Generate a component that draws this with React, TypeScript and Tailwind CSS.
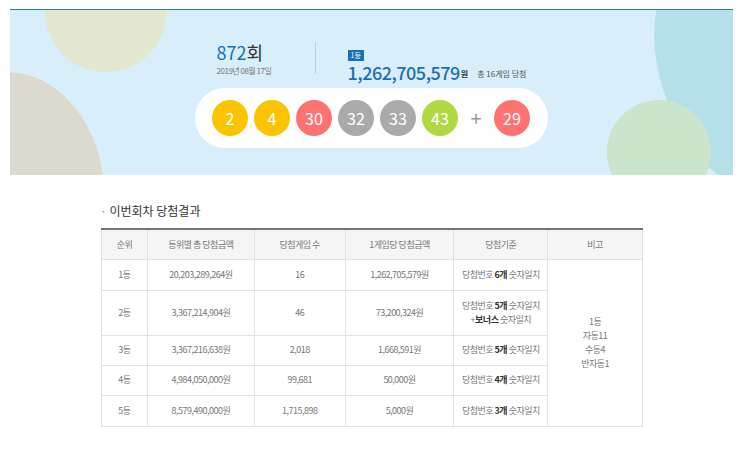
export default function App() {
  const f = { fontFamily: '"Noto Sans CJK KR","Noto Sans",sans-serif' };
  const balls: [string, string][] = [
    ["2", "bg-[#fbc400]"], ["4", "bg-[#fbc400]"], ["30", "bg-[#ff7272]"],
    ["32", "bg-[#aaaaaa]"], ["33", "bg-[#aaaaaa]"], ["43", "bg-[#b0d840]"],
  ];
  const rows = [
    ["1등", "20,203,289,264원", "16", "1,262,705,579원", "6", false],
    ["2등", "3,367,214,904원", "46", "73,200,324원", "5", true],
    ["3등", "3,367,216,638원", "2,018", "1,668,591원", "5", false],
    ["4등", "4,984,050,000원", "99,681", "50,000원", "4", false],
    ["5등", "8,579,490,000원", "1,715,898", "5,000원", "3", false],
  ] as const;
  const td = "border border-[#e2e2e2] text-center text-[9px] text-[#777] tracking-[-0.5px]";
  return (
    <div className="w-[743px] h-[449px] bg-white pt-[9px]" style={f}>
      <div className="relative mx-[10px] h-[166px] overflow-hidden bg-[#d8eefb] border-t border-[#2d7f99]">
        <div className="absolute left-[35px] top-[-60px] w-[122px] h-[122px] rounded-full bg-[#e3e7cf]" />
        <div className="absolute left-[-60px] top-[60px] w-[150px] h-[200px] rounded-[50%] bg-[#dcd9cf] rotate-[-20deg]" />
        <div className="absolute right-[-40px] top-[-40px] w-[110px] h-[220px] rounded-[50%] bg-[#b5e0ea] rotate-[-20deg]" />
        <div className="absolute left-[597px] top-[90px] w-[104px] h-[104px] rounded-full bg-[#cbe5cd]" />
        <div className="relative flex flex-col items-center pt-[31px]">
          <div className="flex items-start">
            <div className="w-[98px]">
              <div className="text-[18px] leading-[22px] text-[#1b6fb5]">872<span className="text-[#333]">회</span></div>
              <div className="text-[8px] text-[#777] mt-[2px] tracking-[-0.5px]">2019년 08월 17일</div>
            </div>
            <div className="w-px h-[32px] bg-[#bcd] mt-[1px] mr-[32px]" />
            <div className="mt-[-2px]">
              <div className="inline-block bg-[#1b6fb5] text-white text-[7px] px-[3px] leading-[11px]">1등</div>
              <div className="flex items-end gap-[1px] mt-[-2px]">
                <span className="text-[18px] leading-[22px] text-[#1b6fb5] font-medium tracking-[-0.5px]">1,262,705,579</span>
                <span className="text-[8px] text-[#333] font-bold mb-[3px]">원</span>
                <span className="text-[8px] text-[#555] ml-[8px] mb-[3px]">총 16게임 당첨</span>
              </div>
            </div>
          </div>
          <div className="mt-[5px] w-[353px] h-[60px] rounded-full bg-white flex items-center pl-[17px] gap-[6px]">
            {balls.map(([n, c]) => (
              <div key={n} className={`w-[36px] h-[36px] rounded-full ${c} text-white text-[16px] flex items-center justify-center`}>{n}</div>
            ))}
            <div className="w-[24px] text-center text-[#999] text-[20px]">+</div>
            <div className="w-[36px] h-[36px] rounded-full bg-[#ff7272] text-white text-[16px] flex items-center justify-center">29</div>
          </div>
        </div>
      </div>
      <div className="ml-[100px] mt-[27px] text-[12px] text-[#333]"><span className="text-[#888]">·</span> 이번회차 당첨결과</div>
      <table className="ml-[101px] mt-[8px] w-[542px] border-collapse border-t-2 border-t-[#777]">
        <colgroup>
          <col className="w-[46px]" /><col className="w-[107px]" /><col className="w-[91px]" />
          <col className="w-[109px]" /><col className="w-[94px]" /><col className="w-[95px]" />
        </colgroup>
        <thead>
          <tr className="h-[30px] bg-[#f5f5f5]">
            {["순위", "등위별 총 당첨금액", "당첨게임 수", "1게임당 당첨금액", "당첨기준", "비고"].map(h => (
              <th key={h} className={`${td} font-normal text-[#555]`}>{h}</th>
            ))}
          </tr>
        </thead>
        <tbody>
          {rows.map((r, i) => (
            <tr key={i} className={r[5] ? "h-[45px]" : i === 0 || i === 4 ? "h-[31px]" : "h-[30px]"}>
              <td className={td}>{r[0]}</td>
              <td className={td}>{r[1]}</td>
              <td className={td}>{r[2]}</td>
              <td className={td}>{r[3]}</td>
              <td className={`${td} leading-[14px]`}>
                당첨번호 <b className="text-[#333]">{r[4]}개</b> 숫자일치
                {r[5] && <><br />+<b className="text-[#333]">보너스</b> 숫자일치</>}
              </td>
              {i === 0 && (
                <td rowSpan={5} className={`${td} leading-[14px]`}>1등<br />자동11<br />수동4<br />반자동1</td>
              )}
            </tr>
          ))}
        </tbody>
      </table>
    </div>
  );
}
